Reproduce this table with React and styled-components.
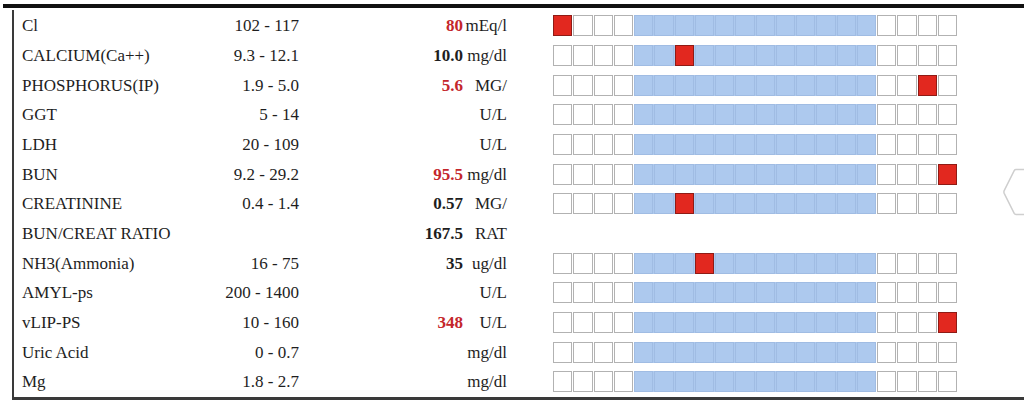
import styled, { createGlobalStyle } from 'styled-components'

const GlobalStyle = createGlobalStyle`
  html, body {
    margin: 0;
    background: #fff;
  }
  body {
    font-family: "Liberation Serif", "Times New Roman", serif;
    font-size: 17px;
    color: #1e1e1e;
  }
`

const rows = [
  { name: 'Cl', range: '102 - 117', value: '80', unit: 'mEq/l', high: true, mark: 0 },
  { name: 'CALCIUM(Ca++)', range: '9.3 - 12.1', value: '10.0', unit: 'mg/dl', mark: 6 },
  { name: 'PHOSPHORUS(IP)', range: '1.9 - 5.0', value: '5.6', unit: 'MG/', high: true, mark: 18 },
  { name: 'GGT', range: '5 - 14', unit: 'U/L' },
  { name: 'LDH', range: '20 - 109', unit: 'U/L' },
  { name: 'BUN', range: '9.2 - 29.2', value: '95.5', unit: 'mg/dl', high: true, mark: 19 },
  { name: 'CREATININE', range: '0.4 - 1.4', value: '0.57', unit: 'MG/', mark: 6 },
  { name: 'BUN/CREAT RATIO', range: '', value: '167.5', unit: 'RAT', noScale: true },
  { name: 'NH3(Ammonia)', range: '16 - 75', value: '35', unit: 'ug/dl', mark: 7 },
  { name: 'AMYL-ps', range: '200 - 1400', unit: 'U/L' },
  { name: 'vLIP-PS', range: '10 - 160', value: '348', unit: 'U/L', high: true, mark: 19 },
  { name: 'Uric Acid', range: '0 - 0.7', unit: 'mg/dl' },
  { name: 'Mg', range: '1.8 - 2.7', unit: 'mg/dl' },
]

// 4 low cells, 12 normal-range cells, 4 high cells
const bands = [
  { from: 0, count: 4 },
  { from: 4, count: 12, normal: true },
  { from: 16, count: 4 },
]

function Scale({ mark }) {
  return (
    <Track>
      {bands.map((b) => (
        <Band key={b.from} $normal={b.normal}>
          {Array.from({ length: b.count }, (_, i) => b.from + i).map((i) => (
            <Cell key={i} $normal={b.normal} $hit={i === mark} />
          ))}
        </Band>
      ))}
    </Track>
  )
}

export default function App() {
  return (
    <Page>
      <GlobalStyle />
      <TopRule />
      <Panel>
        {rows.map((r) => (
          <Row key={r.name}>
            <Label>{r.name}</Label>
            <Range>{r.range}</Range>
            <Value $high={r.high}>{r.value}</Value>
            <Unit>{r.unit}</Unit>
            {!r.noScale && <Scale mark={r.mark} />}
          </Row>
        ))}
      </Panel>
      <NavArrow width="22" height="48" viewBox="0 0 22 48">
        <path
          d="M22 1.5 H14 Q12.8 1.5 12.2 2.6 L2.2 22.6 Q1.6 24 2.2 25.4 L12.2 45.4 Q12.8 46.5 14 46.5 H22"
          fill="#fff"
          stroke="#cfcfcf"
          strokeWidth="1.5"
        />
      </NavArrow>
    </Page>
  )
}

const Page = styled.div`
  position: relative;
  width: 1024px;
  height: 407px;
  overflow: hidden;
`

const TopRule = styled.div`
  margin: 4px 0 0 3px;
  height: 4px;
  background: #111;
`

const Panel = styled.div`
  margin: 2px 0 0 12px;
  padding-top: 1px;
  border-left: 2px solid #3a3a3a;
  border-bottom: 3px solid #3a3a3a;
`

const Row = styled.div`
  display: grid;
  grid-template-columns: 206px 79px 164px 44px auto;
  align-items: center;
  height: 29.67px;
  line-height: 1;
`

const Label = styled.div`
  padding-left: 8px;
  white-space: nowrap;
`

const Range = styled.div`
  text-align: right;
  white-space: nowrap;
`

const Value = styled.div`
  text-align: right;
  font-weight: bold;
  color: ${(p) => (p.$high ? '#c4262b' : '#1e1e1e')};
`

const Unit = styled.div`
  text-align: right;
  white-space: nowrap;
`

const Track = styled.div`
  display: flex;
  gap: 1px;
  margin-left: 46px;
`

const Band = styled.div`
  display: flex;
  gap: 1px;
  background: ${(p) => (p.$normal ? '#adc9ee' : 'transparent')};
`

const Cell = styled.div`
  flex: none;
  box-sizing: border-box;
  width: 19.25px;
  height: 21px;
  border: 1px solid ${(p) => (p.$hit ? '#8f1b15' : p.$normal ? '#a0bce3' : '#b2b2b2')};
  background: ${(p) => (p.$hit ? '#e2281f' : p.$normal ? '#adc9ee' : '#fff')};
`

const NavArrow = styled.svg`
  position: absolute;
  left: 1002px;
  top: 168px;
`
